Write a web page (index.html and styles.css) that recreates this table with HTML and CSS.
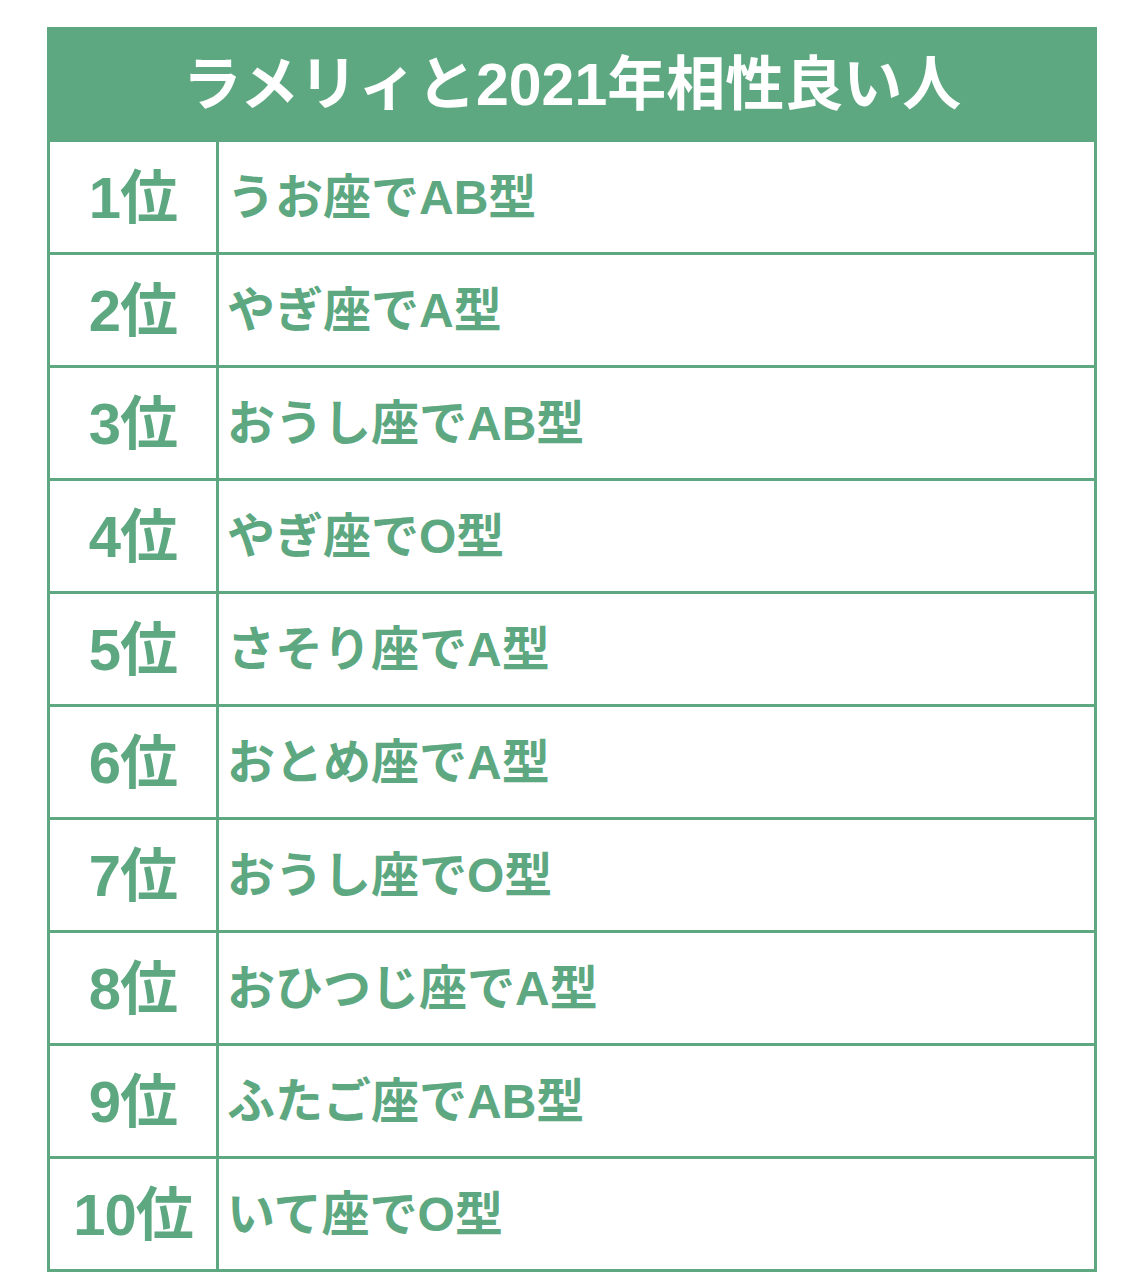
FILE: index.html
```html
<!DOCTYPE html>
<html lang="ja">
<head>
<meta charset="utf-8">
<title>ラメリィと2021年相性良い人</title>
<link rel="stylesheet" href="styles.css">
</head>
<body>
<div class="table">
  <div class="header">ラメリィと2021年相性良い人</div>
  <div class="row"><div class="rank">1位</div><div class="name">うお座でAB型</div></div>
  <div class="row"><div class="rank">2位</div><div class="name">やぎ座でA型</div></div>
  <div class="row"><div class="rank">3位</div><div class="name">おうし座でAB型</div></div>
  <div class="row"><div class="rank">4位</div><div class="name">やぎ座でO型</div></div>
  <div class="row"><div class="rank">5位</div><div class="name">さそり座でA型</div></div>
  <div class="row"><div class="rank">6位</div><div class="name">おとめ座でA型</div></div>
  <div class="row"><div class="rank">7位</div><div class="name">おうし座でO型</div></div>
  <div class="row"><div class="rank">8位</div><div class="name">おひつじ座でA型</div></div>
  <div class="row"><div class="rank">9位</div><div class="name">ふたご座でAB型</div></div>
  <div class="row"><div class="rank">10位</div><div class="name">いて座でO型</div></div>
</div>
</body>
</html>
```

FILE: styles.css
```css
html, body {
  margin: 0;
  padding: 0;
  background: #ffffff;
}

body {
  font-family: "Liberation Sans", "Noto Sans CJK JP", sans-serif;
  font-weight: 700;
  color: #5da881;
}

.table {
  margin: 27px 0 0 47px;
  width: 1050px;
}

.header {
  height: 115px;
  background: #5da881;
  color: #ffffff;
  font-size: 59px;
  display: flex;
  align-items: center;
  justify-content: center;
  line-height: 1;
  padding-top: 2px;
  box-sizing: border-box;
}

.row {
  display: grid;
  grid-template-columns: 169px 1fr;
  height: 113px;
  box-sizing: border-box;
  border: 3px solid #5da881;
  border-top: 0;
}

.rank {
  border-right: 3px solid #5da881;
  display: flex;
  align-items: center;
  justify-content: center;
  font-size: 58px;
  line-height: 1;
  letter-spacing: -1px;
  padding-top: 2px;
}

.name {
  display: flex;
  align-items: center;
  padding-left: 8px;
  padding-top: 2px;
  font-size: 48px;
  line-height: 1;
}
```
